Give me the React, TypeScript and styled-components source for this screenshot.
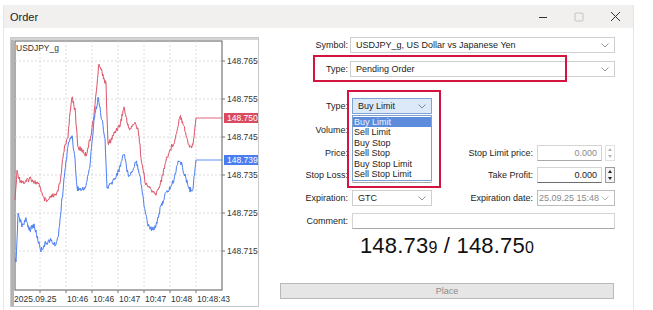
import React from "react";
import styled, { createGlobalStyle } from "styled-components";

const GlobalStyle = createGlobalStyle`
  html, body {
    margin: 0;
    padding: 0;
    background: #fff;
  }
  body {
    font-family: "Liberation Sans", Arial, sans-serif;
    color: #1c1c1c;
  }
`;

// chart geometry is in page pixels, shifted into the svg frame
const OX = 11;
const OY = 38;

const redKeys = [
  [15, 200], [17, 172], [20, 180], [25, 183], [30, 178], [35, 182], [40, 186], [43, 198],
  [47, 202], [52, 196], [56, 196], [60, 182], [64, 150], [68, 135], [72, 95], [75, 110],
  [78, 148], [82, 150], [86, 155], [90, 140], [94, 115], [99, 63], [103, 75], [106, 85],
  [108, 145], [112, 138], [116, 130], [120, 125], [124, 107], [127, 122], [130, 130],
  [134, 123], [138, 128], [142, 165], [146, 185], [150, 188], [155, 195], [158, 190],
  [162, 178], [166, 160], [170, 150], [175, 140], [180, 115], [184, 125], [187, 140],
  [190, 147], [193, 145], [196, 118], [222, 118],
];

const blueKeys = [
  [15, 258], [16, 262], [18, 215], [22, 225], [26, 220], [30, 230], [34, 225], [38, 240],
  [41, 250], [45, 244], [50, 240], [55, 245], [58, 238], [61, 210], [64, 180], [68, 145],
  [72, 135], [75, 160], [77, 188], [82, 190], [86, 186], [90, 165], [94, 120], [98, 98],
  [102, 120], [105, 140], [107, 188], [111, 184], [115, 178], [119, 170], [124, 152],
  [128, 175], [132, 172], [136, 160], [140, 175], [144, 205], [148, 225], [152, 230],
  [156, 225], [160, 210], [165, 195], [170, 188], [174, 180], [178, 160], [182, 165],
  [186, 180], [190, 190], [193, 188], [196, 160], [222, 160],
];

const noise = (i: number) => {
  const v = Math.sin(i * 12.9898) * 43758.5453;
  return (v - Math.floor(v)) * 2 - 1;
};

function buildLine(keys: number[][], seed: number) {
  const pts: string[] = [];
  let n = 0;
  for (let k = 0; k < keys.length - 1; k++) {
    const [x0, y0] = keys[k];
    const [x1, y1] = keys[k + 1];
    const steps = Math.max(1, Math.round((x1 - x0) * 2));
    for (let s = 0; s < steps; s++) {
      const t = s / steps;
      const x = x0 + (x1 - x0) * t;
      let y = y0 + (y1 - y0) * t;
      if (x > 16 && x < 195) y += noise(n + seed) * 2.6;
      n++;
      pts.push(`${(x - OX).toFixed(1)},${(y - OY).toFixed(1)}`);
    }
  }
  const last = keys[keys.length - 1];
  pts.push(`${last[0] - OX},${last[1] - OY}`);
  return pts.join(" ");
}

const priceLevels = ["148.765", "148.755", "148.745", "148.735", "148.725", "148.715"];
const priceY = (p: number) => 61 + (148.765 - p) * 3800 - OY;
const timeTicks = [40, 66, 92, 118, 144, 170, 196];
const timeLabels = [
  { x: 14, t: "2025.09.25" },
  { x: 67, t: "10:46" },
  { x: 93, t: "10:46" },
  { x: 119, t: "10:47" },
  { x: 145, t: "10:47" },
  { x: 171, t: "10:48" },
  { x: 197, t: "10:48:43" },
];

const orderTypes = ["Buy Limit", "Sell Limit", "Buy Stop", "Sell Stop", "Buy Stop Limit", "Sell Stop Limit"];

const Page = styled.div`
  width: 653px;
  height: 310px;
  padding: 5px 0 0 3px;
  box-sizing: border-box;
  overflow: hidden;
`;

const Window = styled.div`
  width: 631px;
  height: 305px;
  border-left: 1px solid #e6e6e6;
  border-right: 1px solid #e6e6e6;
  box-sizing: border-box;
  display: flex;
  flex-direction: column;
`;

const TitleBar = styled.div`
  height: 23px;
  background: #f1f0ef;
  display: flex;
  align-items: center;
  padding-left: 6px;
`;

const Title = styled.span`
  font-size: 11px;
  color: #222;
  flex: 1;
`;

const WinButtons = styled.div`
  display: flex;
  align-items: center;
`;

const WinButton = styled.div`
  width: 36px;
  height: 23px;
  display: flex;
  align-items: center;
  justify-content: center;
`;

const Body = styled.div`
  flex: 1;
  display: flex;
  padding: 9px 0 0 6px;
`;

const ChartFrame = styled.div`
  width: 249px;
  height: 270px;
  border: 1px solid #c9c9c9;
  box-sizing: border-box;
  flex-shrink: 0;
`;

const Form = styled.div`
  position: relative;
  margin-left: 1px;
  display: flex;
  flex-direction: column;
  width: 360px;
`;

const Row = styled.div<{ $mt: number }>`
  display: grid;
  grid-template-columns: 88px 80px 97px 78px;
  column-gap: 4px;
  height: 16px;
  margin-top: ${(p) => p.$mt}px;
`;

const Label = styled.div`
  font-size: 9px;
  line-height: 16px;
  text-align: right;
  color: #1c1c1c;
  white-space: nowrap;
`;

const Select = styled.div<{ $span?: boolean; $focus?: boolean; $muted?: boolean; $shift?: number }>`
  grid-column: ${(p) => (p.$span ? "2 / 5" : "auto")};
  margin-left: ${(p) => p.$shift || 0}px;
  position: relative;
  height: 16px;
  box-sizing: border-box;
  border: 1px solid ${(p) => (p.$focus ? "#7ea4d6" : p.$muted ? "#bdbdbd" : "#cfcfcf")};
  background: ${(p) => (p.$focus ? "#dce9f8" : "#fff")};
  display: flex;
  align-items: center;
  justify-content: space-between;
  padding: 0 5px 0 ${(p) => (p.$muted ? 1 : 5)}px;
  font-size: 9px;
  white-space: nowrap;
  overflow: hidden;
  color: ${(p) => (p.$muted ? "#8a8a8a" : "#1c1c1c")};
`;

const Input = styled.div<{ $span?: boolean; $muted?: boolean; $strong?: boolean }>`
  grid-column: ${(p) => (p.$span ? "2 / 5" : "auto")};
  height: 16px;
  box-sizing: border-box;
  border: 1px solid #d4d4d4;
  border-bottom-color: ${(p) => (p.$strong ? "#6d6d6d" : "#a9a9a9")};
  background: #fff;
  font-size: 9px;
  line-height: 14px;
  text-align: right;
  padding-right: 4px;
  color: ${(p) => (p.$muted ? "#8a8a8a" : "#1c1c1c")};
  flex: 1;
`;

const SpinGroup = styled.div`
  display: flex;
  gap: 3px;
`;

const Spin = styled.div<{ $active?: boolean }>`
  width: 10px;
  height: 16px;
  box-sizing: border-box;
  border: 1px solid ${(p) => (p.$active ? "#9a9a9a" : "#e0e0e0")};
  display: flex;
  flex-direction: column;
  align-items: center;
  justify-content: space-around;
  background: ${(p) => (p.$active ? "#f4f4f4" : "#fff")};
`;

const Arrow = styled.div<{ $down?: boolean; $active?: boolean }>`
  width: 0;
  height: 0;
  border-left: 2.5px solid transparent;
  border-right: 2.5px solid transparent;
  ${(p) => (p.$down ? "border-top" : "border-bottom")}: 3px solid ${(p) => (p.$active ? "#222" : "#b5b5b5")};
`;

const DropList = styled.div`
  position: absolute;
  left: 92px;
  top: 78px;
  width: 80px;
  height: 66px;
  box-sizing: border-box;
  border: 1px solid #7f9fcf;
  background: #fff;
  padding-top: 1px;
  z-index: 2;
`;

const DropItem = styled.div<{ $active?: boolean }>`
  height: 10.4px;
  line-height: 10.4px;
  font-size: 9px;
  padding-left: 1px;
  background: ${(p) => (p.$active ? "#5d8cdc" : "transparent")};
  color: ${(p) => (p.$active ? "#eef4ff" : "#1c1c1c")};
`;

const Highlight = styled.div<{ $l: number; $t: number; $w: number; $h: number }>`
  position: absolute;
  left: ${(p) => p.$l}px;
  top: ${(p) => p.$t}px;
  width: ${(p) => p.$w}px;
  height: ${(p) => p.$h}px;
  box-sizing: border-box;
  border: 2px solid #d2143f;
  z-index: 3;
  pointer-events: none;
`;

const Bottom = styled.div`
  margin-left: 20px;
  width: 334px;
  display: flex;
  flex-direction: column;
  align-items: center;
`;

const Quote = styled.div`
  margin-top: 4px;
  height: 26px;
  font-size: 22px;
  line-height: 26px;
  color: #111;
  letter-spacing: 0.2px;
`;

const Small = styled.span`
  font-size: 16px;
`;

const PlaceButton = styled.div`
  margin-top: 24px;
  width: 100%;
  height: 16px;
  box-sizing: border-box;
  border: 1px solid #b9b9b9;
  background: #e6e6e6;
  font-size: 9px;
  line-height: 14px;
  text-align: center;
  color: #8c8c8c;
`;

const Chevron = ({ color = "#8a8a8a" }: { color?: string }) => (
  <svg width="8" height="5" viewBox="0 0 8 5" style={{ flexShrink: 0 }}>
    <polyline points="0.5,0.5 4,4 7.5,0.5" fill="none" stroke={color} strokeWidth="0.9" />
  </svg>
);

const SpinBox = ({ active }: { active?: boolean }) => (
  <Spin $active={active}>
    <Arrow $active={active} />
    <Arrow $down $active={active} />
  </Spin>
);

function Chart() {
  const red = buildLine(redKeys, 3);
  const blue = buildLine(blueKeys, 91);
  const plotL = 15 - OX;
  const plotR = 222 - OX;
  const plotT = 41 - OY;
  const plotB = 290 - OY;
  return (
    <svg width="247" height="268" viewBox="0 0 247 268" style={{ display: "block" }}>
      <rect x="0" y="0" width="3" height="268" fill="#b4b4b4" />
      <rect x="0" y="0" width="247" height="2" fill="#d4d4d4" />
      <rect x={plotL} y={plotT} width={plotR - plotL} height={plotB - plotT} fill="#fff" stroke="#5a5a5a" strokeWidth="1" />
      {priceLevels.map((p) => (
        <line key={p} x1={plotL} x2={plotR} y1={priceY(+p)} y2={priceY(+p)} stroke="#d3d3d3" strokeDasharray="2 2" strokeWidth="0.8" />
      ))}
      {timeTicks.map((x) => (
        <line key={x} x1={x - OX} x2={x - OX} y1={plotT} y2={plotB} stroke="#d3d3d3" strokeDasharray="2 2" strokeWidth="0.8" />
      ))}
      <text x={16 - OX} y={51 - OY} fontSize="8.5" fill="#333" fontFamily="Liberation Sans, Arial, sans-serif">
        USDJPY_g
      </text>
      <polyline points={red} fill="none" stroke="#dc5267" strokeWidth="1" strokeLinejoin="round" />
      <polyline points={blue} fill="none" stroke="#4b7df2" strokeWidth="1" strokeLinejoin="round" />
      {priceLevels.map((p) => (
        <g key={p}>
          <line x1={plotR} x2={plotR + 3} y1={priceY(+p)} y2={priceY(+p)} stroke="#555" strokeWidth="0.8" />
          <text x={216} y={priceY(+p) + 3} fontSize="8.5" fill="#333" fontFamily="Liberation Sans, Arial, sans-serif">
            {p}
          </text>
        </g>
      ))}
      <rect x={213} y={113 - OY} width="34" height="10" fill="#da4b60" />
      <text x={216} y={121 - OY} fontSize="8.5" fill="#fff" fontFamily="Liberation Sans, Arial, sans-serif">
        148.750
      </text>
      <rect x={213} y={155 - OY} width="34" height="10" fill="#4b7df2" />
      <text x={216} y={163 - OY} fontSize="8.5" fill="#fff" fontFamily="Liberation Sans, Arial, sans-serif">
        148.739
      </text>
      {timeTicks.map((x) => (
        <line key={x} x1={x - OX} x2={x - OX} y1={plotB} y2={plotB + 3} stroke="#555" strokeWidth="0.8" />
      ))}
      {timeLabels.map((l, i) => (
        <text key={i} x={l.x - OX} y={302 - OY} fontSize="8.5" fill="#333" fontFamily="Liberation Sans, Arial, sans-serif">
          {l.t}
        </text>
      ))}
    </svg>
  );
}

export default function App() {
  return (
    <>
      <GlobalStyle />
      <Page>
        <Window>
          <TitleBar>
            <Title>Order</Title>
            <WinButtons>
              <WinButton>
                <svg width="10" height="10" viewBox="0 0 10 10">
                  <line x1="1" y1="5.5" x2="9" y2="5.5" stroke="#333" strokeWidth="1" />
                </svg>
              </WinButton>
              <WinButton>
                <svg width="10" height="10" viewBox="0 0 10 10">
                  <rect x="1" y="1" width="8" height="8" rx="1" fill="none" stroke="#c4c4c4" strokeWidth="1" />
                </svg>
              </WinButton>
              <WinButton>
                <svg width="11" height="11" viewBox="0 0 11 11">
                  <path d="M1 1 L10 10 M10 1 L1 10" stroke="#333" strokeWidth="1" />
                </svg>
              </WinButton>
            </WinButtons>
          </TitleBar>
          <Body>
            <ChartFrame>
              <Chart />
            </ChartFrame>
            <Form>
              <Row $mt={0}>
                <Label>Symbol:</Label>
                <Select $span $shift={-2}>
                  <span>USDJPY_g, US Dollar vs Japanese Yen</span>
                  <Chevron />
                </Select>
              </Row>
              <Row $mt={8}>
                <Label>Type:</Label>
                <Select $span $shift={-2}>
                  <span>Pending Order</span>
                  <Chevron />
                </Select>
              </Row>
              <Row $mt={21}>
                <Label>Type:</Label>
                <Select $focus>
                  <span>Buy Limit</span>
                  <Chevron color="#6a7f9c" />
                </Select>
              </Row>
              <Row $mt={8}>
                <Label>Volume:</Label>
                <Input />
              </Row>
              <Row $mt={7}>
                <Label>Price:</Label>
                <Input />
                <Label>Stop Limit price:</Label>
                <SpinGroup>
                  <Input $muted>0.000</Input>
                  <SpinBox />
                </SpinGroup>
              </Row>
              <Row $mt={6}>
                <Label>Stop Loss:</Label>
                <Input />
                <Label>Take Profit:</Label>
                <SpinGroup>
                  <Input $strong>0.000</Input>
                  <SpinBox active />
                </SpinGroup>
              </Row>
              <Row $mt={7}>
                <Label>Expiration:</Label>
                <Select>
                  <span>GTC</span>
                  <Chevron />
                </Select>
                <Label>Expiration date:</Label>
                <Select $muted>
                  <span>25.09.25 15:48</span>
                  <Chevron color="#b0b0b0" />
                </Select>
              </Row>
              <Row $mt={7}>
                <Label>Comment:</Label>
                <Input $span />
              </Row>
              <Bottom>
                <Quote>
                  148.73<Small>9</Small> / 148.75<Small>0</Small>
                </Quote>
                <PlaceButton>Place</PlaceButton>
              </Bottom>
              <DropList>
                {orderTypes.map((t, i) => (
                  <DropItem key={t} $active={i === 0}>
                    {t}
                  </DropItem>
                ))}
              </DropList>
              <Highlight $l={53} $t={18} $w={254} $h={27} />
              <Highlight $l={87} $t={53} $w={94} $h={98} />
            </Form>
          </Body>
        </Window>
      </Page>
    </>
  );
}
